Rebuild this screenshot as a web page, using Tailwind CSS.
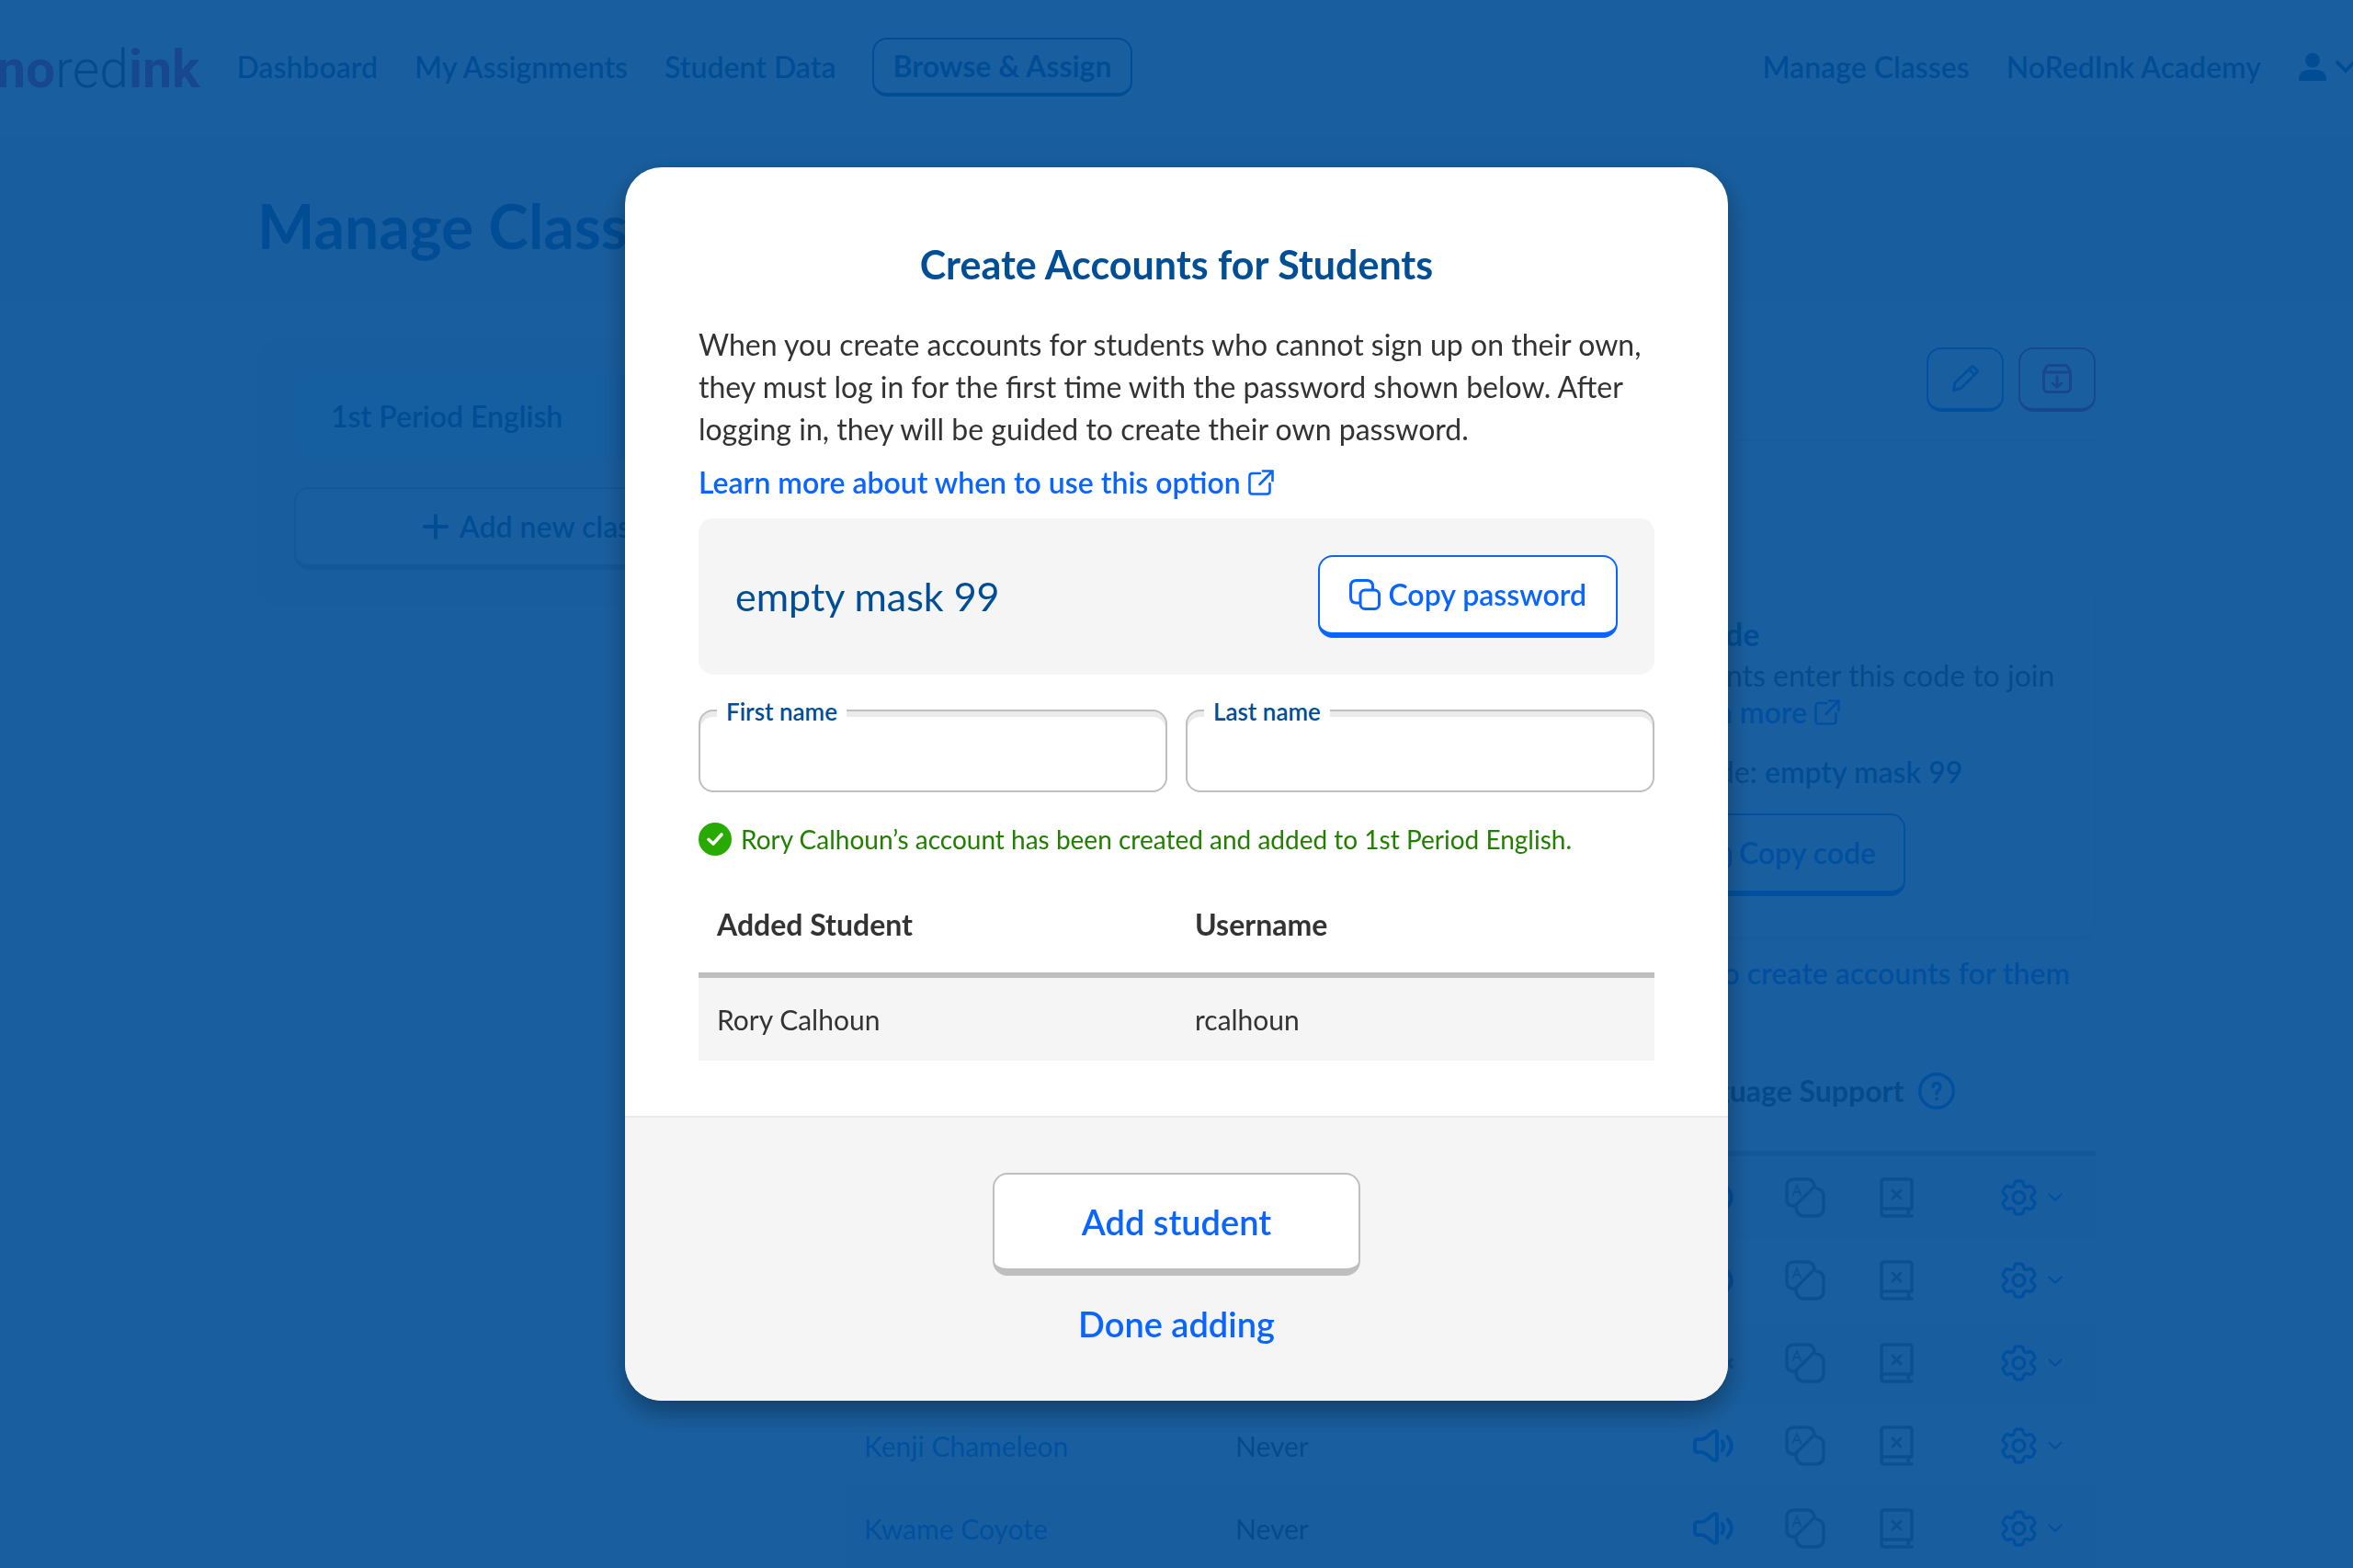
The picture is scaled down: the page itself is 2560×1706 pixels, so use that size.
<!DOCTYPE html>
<html lang="en">

<head>
    <meta charset="UTF-8">
    <meta name="viewport" content="width=device-width, initial-scale=1.0">
    <script src="https://cdn.jsdelivr.net/npm/@tailwindcss/browser@4"></script>

    <title>Manage Classes</title>
</head>

<body class="h-screen overflow-hidden bg-white font-['Lato',sans-serif] text-[32px] leading-[46px] text-[#333333]">

    <!-- icons used more than once -->
    <svg class="hidden" aria-hidden="true">
        <symbol id="icon-external" viewBox="0 0 28 28">
            <path d="M13 4H4.5Q1.5 4 1.5 7V23.500Q1.5 26.500 4.500 26.500H20.500Q23.500 26.500 23.500 23.500V15M16 1.500H26.500V12M26 2 12.500 16" fill="none" stroke="currentColor" stroke-width="2.600" stroke-linecap="round" />
        </symbol>
        <symbol id="icon-copy" viewBox="0 0 34 34">
            <path d="M11 26H8Q1.500 26 1.500 19.500V8Q1.500 1.500 8 1.500H19Q25.500 1.500 25.500 8V11" fill="none" stroke="currentColor" stroke-width="3" />
            <rect x="12" y="12" width="20.500" height="20.500" rx="5" fill="none" stroke="currentColor" stroke-width="3" />
        </symbol>
        <symbol id="icon-speaker" viewBox="0 0 44 36">
            <path d="M2 14Q2 11 5 11H9Q12 11 15 8.500L21 3.500Q26 0 26 5V31Q26 36 21 32.500L15 27.500Q12 25 9 25H5Q2 25 2 22Z" fill="none" stroke="currentColor" stroke-width="4" stroke-linejoin="round" />
            <path d="M31.500 13Q35 18 31.500 23M37.500 8Q46 18 37.500 28" fill="none" stroke="currentColor" stroke-width="4" stroke-linecap="round" />
        </symbol>
        <symbol id="icon-muted" viewBox="0 0 44 36">
            <path d="M2 14Q2 11 5 11H9Q12 11 15 8.500L21 3.500Q26 0 26 5V31Q26 36 21 32.500L15 27.500Q12 25 9 25H5Q2 25 2 22Z" fill="none" stroke="currentColor" stroke-width="4" stroke-linejoin="round" />
            <path d="M34 14 42 22M42 14 34 22" fill="none" stroke="currentColor" stroke-width="3.500" stroke-linecap="round" />
        </symbol>
        <symbol id="icon-translate" viewBox="0 0 44 44">
            <path d="M10 2H24Q31.500 2 32 10L12 30Q10.500 31.500 8 31Q2 30 2 24V10Q2 2 10 2Z" fill="none" stroke="currentColor" stroke-width="3.600" stroke-linejoin="round" />
            <path d="M33 12Q42 12.500 42 21V33Q42 42 33 42H21Q13 42 12 33V30" fill="none" stroke="currentColor" stroke-width="3.600" />
            <path d="M8.500 19.500 12.800 9 17.500 19.500M10 16H16" fill="none" stroke="currentColor" stroke-width="1.800" stroke-linecap="round" />
        </symbol>
        <symbol id="icon-book" viewBox="0 0 37 44">
            <path d="M35 34V5Q35 2 32 2H5Q2 2 2 5V39Q2 42 5 42H35M3 34H35M32 34Q30.500 38 32 42" fill="none" stroke="currentColor" stroke-width="3.600" stroke-linecap="round" stroke-linejoin="round" />
            <path d="M14 14 23 23M23 14 14 23" fill="none" stroke="currentColor" stroke-width="3" stroke-linecap="round" />
        </symbol>
        <symbol id="icon-gear" viewBox="0 0 39 40">
            <path d="M17.500 2H21.500Q23.500 2 24 4L25 7Q26 9 28.500 8.500L31.500 7.700Q33.500 7.300 34.500 9L36.500 12.500Q37.500 14.200 36 15.700L33.500 18Q32 20 33.500 22L36 24.300Q37.500 25.800 36.500 27.500L34.500 31Q33.500 32.700 31.500 32.300L28.500 31.500Q26 31 25 33L24 36Q23.500 38 21.500 38H17.500Q15.500 38 15 36L14 33Q13 31 10.500 31.500L7.500 32.300Q5.500 32.700 4.500 31L2.500 27.500Q1.500 25.800 3 24.300L5.500 22Q7 20 5.500 18L3 15.700Q1.500 14.200 2.500 12.500L4.500 9Q5.500 7.300 7.500 7.700L10.500 8.500Q13 9 14 7L15 4Q15.500 2 17.500 2Z" fill="none" stroke="currentColor" stroke-width="3.400" stroke-linejoin="round" />
            <circle cx="19.500" cy="20" r="6.400" fill="none" stroke="currentColor" stroke-width="3.400" />
        </symbol>
        <symbol id="icon-chevron" viewBox="0 0 16 10">
            <path d="M1.500 1.500 8 7.800 14.500 1.500" fill="none" stroke="currentColor" stroke-width="2.200" stroke-linecap="round" stroke-linejoin="round" />
        </symbol>
    </svg>

    <header class="-mx-1 flex h-[148px] items-center pb-[2px] text-[#004e95]">
        <a href="#" class="pt-1 font-['Roboto',sans-serif] text-[57px] font-bold leading-none text-[#e70d4f]">no<span class="font-light text-[#333333]">red</span>ink</a>
        <nav class="ml-10 flex flex-1 items-center gap-10 font-semibold">
            <a href="#">Dashboard</a>
            <a href="#">My Assignments</a>
            <a href="#">Student Data</a>
            <button class="h-16 rounded-2xl border-2 border-b-4 border-[#004e95] px-5 font-bold leading-none">Browse &amp; Assign</button>
            <a href="#" class="ml-auto">Manage Classes</a>
            <a href="#">NoRedInk Academy</a>
            <button class="flex items-center gap-2" aria-label="Account">
                <svg class="h-8 w-8" viewBox="0 0 32 32" fill="currentColor">
                    <circle cx="16" cy="8.500" r="8" />
                    <path d="M1 31V29Q2 19 11 19H21Q30 19 31 29V31Z" />
                </svg>
                <svg class="h-4 w-6" viewBox="0 0 24 16">
                    <path d="M3 3 12 12 21 3" fill="none" stroke="currentColor" stroke-width="4" stroke-linecap="round" />
                </svg>
            </button>
        </nav>
    </header>

    <section class="h-[180px] bg-[#f5f5f5]">
        <div class="mx-auto flex h-full max-w-[2000px] items-center pt-4">
            <h1 class="text-[66px] font-bold leading-[80px] text-[#004e95]">Manage Classes</h1>
        </div>
    </section>

    <main class="mx-auto flex max-w-[2000px] items-start gap-10 pt-10">
        <aside class="flex w-[600px] flex-col gap-8 rounded-3xl bg-[#f5f5f5] p-10">
            <a href="#" class="flex h-[90px] items-center rounded-2xl bg-linear-to-r from-[#d4f0ff] from-60% to-[#f5f5f5] px-10 font-semibold text-[#004e95]">1st Period English</a>
            <button class="flex h-[90px] items-center justify-center gap-3 rounded-2xl border-2 border-b-6 border-[#bfbfbf] bg-white font-semibold text-[#004e95]">
                <svg class="h-7 w-7" viewBox="0 0 28 28">
                    <path d="M14 2V26M2 14H26" fill="none" stroke="currentColor" stroke-width="4" stroke-linecap="round" />
                </svg>
                Add new class
            </button>
        </aside>

        <div class="flex-1 pt-[10px]">
            <div class="flex items-center justify-between border-b-2 border-[#ebebeb] pb-[30px]">
                <h2 class="text-[43px] font-bold text-[#004e95]">1st Period English</h2>
                <div class="flex gap-4">
                    <button class="flex h-[70px] w-[84px] items-center justify-center rounded-2xl border-2 border-b-4 border-[#0a64ff] text-[#0a64ff]" aria-label="Edit class">
                        <svg class="h-8 w-8" viewBox="0 0 32 32">
                            <path d="M3.500 28.500 5 20.500 23 3Q24 2 25 3L29 7Q30 8 29 9L11.500 26.500ZM20.500 6 26 11.500" fill="none" stroke="currentColor" stroke-width="3" stroke-linejoin="round" />
                        </svg>
                    </button>
                    <button class="flex h-[70px] w-[84px] items-center justify-center rounded-2xl border-2 border-b-4 border-[#e70d4f] text-[#e70d4f]" aria-label="Archive class">
                        <svg class="h-8 w-8" viewBox="0 0 32 32">
                            <path d="M1.500 9 4.500 3Q5.500 1.500 7 1.500H25Q26.500 1.500 27.500 3L30.500 9V25.500Q30.500 30.500 26 30.500H6Q1.500 30.500 1.500 25.500ZM1.500 9H30.500M16 14V25M11 21 16 25.500 21 21" fill="none" stroke="currentColor" stroke-width="3" stroke-linecap="round" stroke-linejoin="round" />
                        </svg>
                    </button>
                </div>
            </div>

            <h3 class="h-[150px] pt-10 font-bold text-[#004e95]">Add students</h3>

            <div class="grid grid-cols-2 gap-10">
                <div class="h-[390px] rounded-2xl border border-[#ebebeb] p-10 shadow-md">
                    <h4 class="font-bold text-[#004e95]">Class link</h4>
                    <p>Share this link with your class</p>
                </div>
                <div class="h-[390px] rounded-2xl border border-[#ebebeb] pt-9 pl-[134px] shadow-md">
                    <h4 class="text-[34px] font-bold text-[#004e95]">Class code</h4>
                    <p class="mt-0.5 leading-[40px]">All students enter this code to join<br>up. <a href="#" class="inline-flex items-center gap-2 font-semibold text-[#0a64ff]">Learn more <svg class="h-7 w-7"><use href="#icon-external" /></svg></a></p>
                    <p class="mt-[22px]">Class code: <span class="font-semibold text-[#004e95]">empty mask 99</span></p>
                    <button class="mt-[22px] flex h-[90px] w-[318px] items-center justify-end gap-2 rounded-2xl border-2 border-b-6 border-[#0a64ff] px-[30px] font-semibold text-[#0a64ff]">
                        <svg class="h-[34px] w-[34px]"><use href="#icon-copy" /></svg>
                        Copy code
                    </button>
                </div>
            </div>

            <div class="flex justify-end pt-4 pr-7">
                <a href="#" class="font-semibold text-[#0a64ff]">Students without email? Use this option to create accounts for them</a>
            </div>

            <table class="mt-9 w-full table-fixed text-left text-[30px]">
                <colgroup>
                    <col class="w-[404px]">
                    <col>
                    <col class="w-[100px]">
                    <col class="w-[100px]">
                    <col class="w-[100px]">
                    <col class="w-[166px]">
                </colgroup>
                <thead>
                    <tr class="h-[137px] border-b-6 border-[#bfbfbf] text-[32px]">
                        <th class="px-5">Student</th>
                        <th class="px-5">Last login</th>
                        <th colspan="4" class="pt-1">
                            <span class="flex items-center gap-4">Language Support
                                <button class="h-10 w-10 text-[#0a64ff]" aria-label="About language support">
                                    <svg viewBox="0 0 40 40">
                                        <circle cx="20" cy="20" r="18.300" fill="none" stroke="currentColor" stroke-width="3.400" />
                                        <path d="M16 15.500Q16 11.500 20 11.500Q24 11.500 24 15.500Q24 18 21.500 19.500Q20 20.500 20 23" fill="none" stroke="currentColor" stroke-width="3.400" stroke-linecap="round" />
                                        <circle cx="20" cy="28.500" r="2" fill="currentColor" />
                                    </svg>
                                </button>
                            </span>
                        </th>
                    </tr>
                </thead>
                <tbody id="students"></tbody>
            </table>
        </div>
    </main>

    <div class="fixed inset-0 flex items-center justify-center bg-[#004e95]/90">
        <div role="dialog" aria-modal="true" aria-labelledby="modalTitle" class="w-[1200px] overflow-hidden rounded-[40px] bg-white shadow-[0_12px_28px_rgba(0,0,0,0.35)]">
            <div class="px-20 pt-[78px] pb-[60px]">
                <h2 id="modalTitle" class="text-center text-[43px] font-bold leading-[56px] text-[#004e95]">Create Accounts for Students</h2>
                <p class="mt-9">When you create accounts for students who cannot sign up on their own, they must log in for the first time with the password shown below. After logging in, they will be guided to create their own password.</p>
                <a href="#" class="mt-3 flex items-center gap-2 font-semibold text-[#0a64ff]">Learn more about when to use this option
                    <svg class="h-7 w-7"><use href="#icon-external" /></svg>
                </a>

                <div class="mt-4 flex items-center justify-between rounded-2xl bg-[#f5f5f5] p-10">
                    <span class="text-[43px] text-[#004e95]">empty mask 99</span>
                    <button class="flex h-[90px] items-center gap-2 rounded-2xl border-2 border-b-6 border-[#0a64ff] bg-white px-8 font-semibold text-[#0a64ff]">
                        <svg class="h-[34px] w-[34px]"><use href="#icon-copy" /></svg>
                        Copy password
                    </button>
                </div>

                <div class="mt-[38px] grid grid-cols-2 gap-5">
                    <div class="relative">
                        <label for="firstName" class="absolute -top-3.5 left-5 bg-white px-2.5 text-[26px] font-semibold leading-8 text-[#004e95]">First name</label>
                        <input id="firstName" type="text" class="block h-[90px] w-full rounded-2xl border-2 border-[#bfbfbf] px-5 shadow-[inset_0_6px_0_#ebebeb]">
                    </div>
                    <div class="relative">
                        <label for="lastName" class="absolute -top-3.5 left-5 bg-white px-2.5 text-[26px] font-semibold leading-8 text-[#004e95]">Last name</label>
                        <input id="lastName" type="text" class="block h-[90px] w-full rounded-2xl border-2 border-[#bfbfbf] px-5 shadow-[inset_0_6px_0_#ebebeb]">
                    </div>
                </div>

                <p class="mt-7 flex items-center gap-2.5 text-[28px] text-[#228000]">
                    <svg class="h-9 w-9" viewBox="0 0 36 36">
                        <circle cx="18" cy="18" r="18" fill="#28aa00" />
                        <path d="M11 18.500 16 23 25 13" fill="none" stroke="#fff" stroke-width="3.600" stroke-linecap="round" stroke-linejoin="round" />
                    </svg>
                    Rory Calhoun’s account has been created and added to 1st Period English.
                </p>

                <table class="mt-3.5 w-full table-fixed text-left">
                    <thead>
                        <tr class="h-[111px] border-b-6 border-[#bfbfbf]">
                            <th class="px-5 pt-1">Added Student</th>
                            <th class="px-5 pt-1">Username</th>
                        </tr>
                    </thead>
                    <tbody>
                        <tr class="h-[93px] bg-[#f5f5f5] text-[30px]">
                            <td class="px-5">Rory Calhoun</td>
                            <td class="px-5">rcalhoun</td>
                        </tr>
                    </tbody>
                </table>
            </div>

            <div class="flex flex-col items-center border-t-2 border-[#ebebeb] bg-[#f5f5f5] pt-[60px] pb-14 text-[38px] font-semibold text-[#0a64ff]">
                <button class="h-[112px] w-[400px] rounded-2xl border-2 border-b-8 border-[#bfbfbf] bg-white">Add student</button>
                <button class="mt-6 leading-[56px]">Done adding</button>
            </div>
        </div>
    </div>

    <script>
        const students = [
            { name: "Amara Bishop", login: "Never", audio: true },
            { name: "Diego Finch", login: "Never", audio: true },
            { name: "Hana Heron", login: "Never", audio: false },
            { name: "Kenji Chameleon", login: "Never", audio: true },
            { name: "Kwame Coyote", login: "Never", audio: true }
        ];

        document.getElementById("students").innerHTML = students.map((s) => `
            <tr class="h-[90px] first:h-[93px] odd:bg-[#f5f5f5]">
                <td class="px-5"><a href="#" class="text-[#0a64ff]">${s.name}</a></td>
                <td class="px-5">${s.login}</td>
                <td><svg class="mx-auto h-9 w-11 ${s.audio ? "text-[#0a64ff]" : "text-[#727272]"}"><use href="#${s.audio ? "icon-speaker" : "icon-muted"}" /></svg></td>
                <td><svg class="mx-auto h-11 w-11 text-[#727272]"><use href="#icon-translate" /></svg></td>
                <td><svg class="mx-auto h-11 w-[37px] text-[#727272]"><use href="#icon-book" /></svg></td>
                <td class="pr-9">
                    <button class="ml-auto flex items-center gap-3 text-[#0a64ff]" aria-label="Settings for ${s.name}">
                        <svg class="h-10 w-[39px]"><use href="#icon-gear" /></svg>
                        <svg class="h-[10px] w-4"><use href="#icon-chevron" /></svg>
                    </button>
                </td>
            </tr>`).join("");
    </script>
</body>

</html>
